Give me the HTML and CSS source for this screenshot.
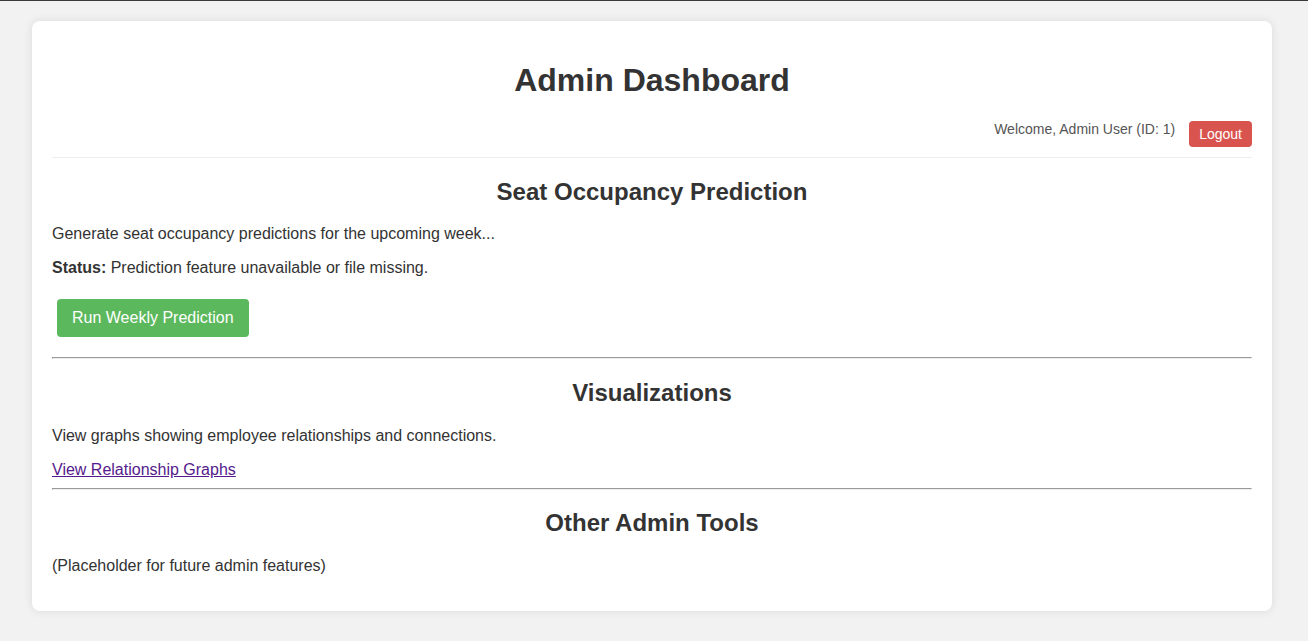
FILE: index.html
```html
<!DOCTYPE html>
<html lang="en">
<head>
<meta charset="utf-8">
<title>Admin Dashboard</title>
<link rel="stylesheet" href="styles.css">
</head>
<body>
<div class="container">
  <h1 class="title">Admin Dashboard</h1>
  <div class="header">
    <span class="welcome">Welcome, Admin User (ID: 1)</span>
    <button class="btn btn-logout">Logout</button>
  </div>

  <section class="section">
    <h2 class="section-title">Seat Occupancy Prediction</h2>
    <p class="text">Generate seat occupancy predictions for the upcoming week...</p>
    <p class="text"><strong>Status:</strong> Prediction feature unavailable or file missing.</p>
    <div class="actions">
      <button class="btn btn-run">Run Weekly Prediction</button>
    </div>
  </section>

  <hr class="divider">

  <section class="section">
    <h2 class="section-title">Visualizations</h2>
    <p class="text">View graphs showing employee relationships and connections.</p>
    <a class="link" href="#graphs">View Relationship Graphs</a>
  </section>

  <hr class="divider">

  <section class="section">
    <h2 class="section-title">Other Admin Tools</h2>
    <p class="text">(Placeholder for future admin features)</p>
  </section>
</div>
</body>
</html>
```

FILE: styles.css
```css
html, body {
  margin: 0;
  padding: 0;
}

body {
  background: #f2f2f2;
  border-top: 1px solid #3a3a3a;
  padding: 20px 36px 20px 32px;
  font-family: "Liberation Sans", Arial, sans-serif;
  color: #333;
}

.container {
  background: #fff;
  border-radius: 8px;
  box-shadow: 0 0 10px rgba(0, 0, 0, 0.1);
  padding: 20px;
}

.title {
  font-size: 32px;
  font-weight: bold;
  text-align: center;
  margin: 21.44px 0;
  line-height: 36.8px;
  color: #333;
}

.header {
  display: flex;
  justify-content: flex-end;
  align-items: flex-start;
  gap: 14px;
  padding-bottom: 10px;
  border-bottom: 1px solid #eee;
}

.welcome {
  font-size: 14px;
  line-height: 16px;
  color: #555;
}

.btn {
  font-family: "Liberation Sans", Arial, sans-serif;
  border: none;
  color: #fff;
  border-radius: 4px;
  cursor: pointer;
}

.btn-logout {
  background: #d9534f;
  font-size: 14px;
  line-height: 16px;
  padding: 5px 10px;
}

.section-title {
  font-size: 24px;
  font-weight: bold;
  text-align: center;
  margin: 19.92px 0;
  line-height: 27.6px;
  color: #333;
}

.text {
  font-size: 16px;
  line-height: 18.4px;
  margin: 16px 0;
}

.section-title + .text {
  margin-top: 17px;
}

.actions {
  display: flex;
  padding-bottom: 7px;
}

.btn-run {
  background: #5cb85c;
  font-size: 16px;
  line-height: 18.4px;
  padding: 10px 15px;
  margin: 5px;
}

.link {
  font-size: 16px;
  line-height: 18.4px;
  color: #551a8b;
  text-decoration: underline;
}

.divider {
  margin: 8px 0;
}
```
